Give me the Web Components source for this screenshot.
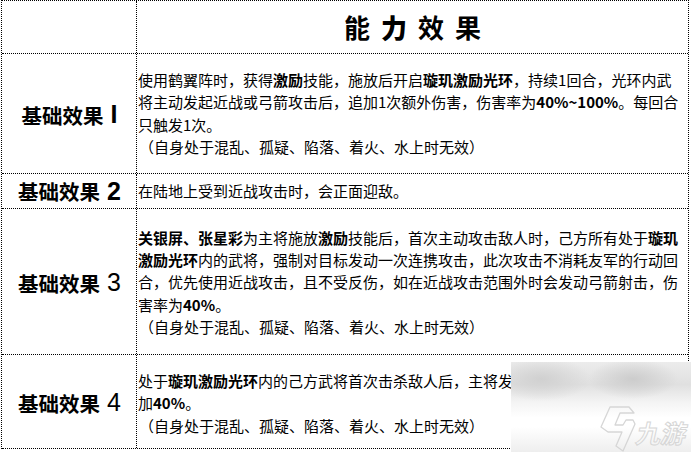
<!DOCTYPE html>
<html lang="zh-CN">
<head>
<meta charset="utf-8">
<title>能力效果</title>
<style>
  body { margin: 0; background: #fff; }
</style>
</head>
<body>
<effect-table>
  <effect-title>
    <span>能</span><b>力</b><span>效</span><span>果</span>
  </effect-title>
  <effect-row style="--row-height: 120px; --label-shift: 2px" label="基础效果" num="I" num-style="bold">
    <div>使用鹤翼阵时，获得<b>激励</b>技能，施放后开启<b>璇玑激励光环</b>，持续1回合，光环内武</div>
    <div>将主动发起近战或弓箭攻击后，追加1次额外伤害，伤害率为<b>40%~100%</b>。每回合</div>
    <div>只触发1次。</div>
    <effect-note></effect-note>
  </effect-row>
  <effect-row style="--row-height: 35px" label="基础效果" num="2" num-style="bold">
    <div>在陆地上受到近战攻击时，会正面迎敌。</div>
  </effect-row>
  <effect-row style="--row-height: 146px; --text-shift: 2px; --label-shift: 2px" label="基础效果" num="3">
    <div><b>关银屏、张星彩</b>为主将施放<b>激励</b>技能后，首次主动攻击敌人时，己方所有处于<b>璇玑</b></div>
    <div><b>激励光环</b>内的武将，强制对目标发动一次连携攻击，此次攻击不消耗友军的行动回</div>
    <div>合，优先使用近战攻击，且不受反伤，如在近战攻击范围外时会发动弓箭射击，伤</div>
    <div>害率为<b>40%</b>。</div>
    <effect-note></effect-note>
  </effect-row>
  <effect-row style="--row-height: 94px; --text-shift: 4px; --label-shift: 2px" label="基础效果" num="4">
    <div>处于<b>璇玑激励光环</b>内的己方武将首次击杀敌人后，主将发</div>
    <div>加<b>40%</b>。</div>
    <effect-note></effect-note>
  </effect-row>
</effect-table>
<site-watermark></site-watermark>

<script>
const CJK = '"Noto Sans CJK SC", "Liberation Sans", sans-serif';

class EffectTable extends HTMLElement {
  connectedCallback() {
    this.attachShadow({ mode: "open" });
    this.shadowRoot.innerHTML = `
      <style>
        :host {
          border-left: 1px dotted #000;
          border-right: 1px dotted #000;
          border-top: 1px dotted #000;
          box-sizing: border-box;
          color: #000;
          display: block;
          font-family: ${CJK};
          margin-left: 1px;
          width: 688px;
        }
      </style>
      <slot></slot>
    `;
  }
}

class EffectTitle extends HTMLElement {
  connectedCallback() {
    this.attachShadow({ mode: "open" });
    this.shadowRoot.innerHTML = `
      <style>
        :host {
          border-bottom: 1px dotted #000;
          box-sizing: border-box;
          display: grid;
          grid-template-columns: 135px 1fr;
          height: 53px;
        }
        #blank {
          border-right: 1px dotted #000;
        }
        #text {
          align-items: center;
          display: flex;
          font-size: 26px;
          font-weight: 700;
          gap: 11px;
          justify-content: center;
          line-height: 1;
        }
        ::slotted(b) {
          font-weight: 900;
        }
      </style>
      <div id="blank"></div>
      <div id="text"><slot></slot></div>
    `;
  }
}

class EffectRow extends HTMLElement {
  connectedCallback() {
    this.attachShadow({ mode: "open" });
    this.shadowRoot.innerHTML = `
      <style>
        :host {
          border-bottom: 1px dotted #000;
          box-sizing: border-box;
          display: grid;
          grid-template-columns: 135px 1fr;
          height: var(--row-height);
        }
        #label {
          align-items: center;
          border-right: 1px dotted #000;
          display: flex;
          font-size: 20.5px;
          font-weight: 700;
          gap: 7px;
          justify-content: center;
          padding: var(--label-shift, 0px) 0 0 1px;
        }
        #num {
          font-family: "Liberation Sans", sans-serif;
          font-size: 25px;
          font-weight: 400;
          line-height: 1;
        }
        :host([num-style="bold"]) #num {
          font-weight: 700;
        }
        #body {
          align-self: center;
          font-size: 15px;
          line-height: 22.2px;
          padding: var(--text-shift, 0px) 0 0 1px;
          white-space: nowrap;
        }
      </style>
      <div id="label"><span id="name"></span><span id="num"></span></div>
      <div id="body"><slot></slot></div>
    `;
    this.shadowRoot.getElementById("name").textContent = this.getAttribute("label");
    this.shadowRoot.getElementById("num").textContent = this.getAttribute("num");
  }
}

class EffectNote extends HTMLElement {
  connectedCallback() {
    this.attachShadow({ mode: "open" });
    this.shadowRoot.innerHTML = `
      <style>
        :host {
          display: block;
          padding-left: 1px;
        }
      </style>
      （自身处于混乱、孤疑、陷落、着火、水上时无效）
    `;
  }
}

class SiteWatermark extends HTMLElement {
  connectedCallback() {
    this.attachShadow({ mode: "open" });
    this.shadowRoot.innerHTML = `
      <style>
        :host {
          background:
            radial-gradient(ellipse 50px 22px at 30px 17px, #d0d0d0, transparent),
            radial-gradient(ellipse 45px 20px at 122px 17px, #cccccc, transparent),
            linear-gradient(#ececec 0, #e0e0e0 25%, #f4f4f4 45%, #fff 62%, #fff 72%, #eee 100%);
          display: block;
          height: 90px;
          left: 511px;
          overflow: hidden;
          position: absolute;
          top: 362px;
          width: 180px;
        }
        #logo {
          height: 48px;
          left: 87px;
          position: absolute;
          top: 42px;
          width: 40px;
        }
        #brand {
          color: transparent;
          display: block;
          font-family: ${CJK};
          font-size: 25px;
          font-weight: 700;
          left: 126px;
          letter-spacing: 0;
          line-height: 1;
          position: absolute;
          top: 58px;
          transform: skewX(-12deg);
          -webkit-text-stroke: 1px #d6d6d6;
        }
      </style>
      <svg id="logo" viewBox="0 0 40 48" fill="none" stroke="#d6d6d6" stroke-width="1.3" stroke-linejoin="round">
        <path d="M12 3H31L36 9H22L17 21H25L28 16H35L37 20L25 47L18 42L24 28H10L3 23Z"/>
      </svg>
      <div id="brand">九游</div>
    `;
  }
}

customElements.define("effect-table", EffectTable);
customElements.define("effect-title", EffectTitle);
customElements.define("effect-row", EffectRow);
customElements.define("effect-note", EffectNote);
customElements.define("site-watermark", SiteWatermark);
</script>
</body>
</html>
